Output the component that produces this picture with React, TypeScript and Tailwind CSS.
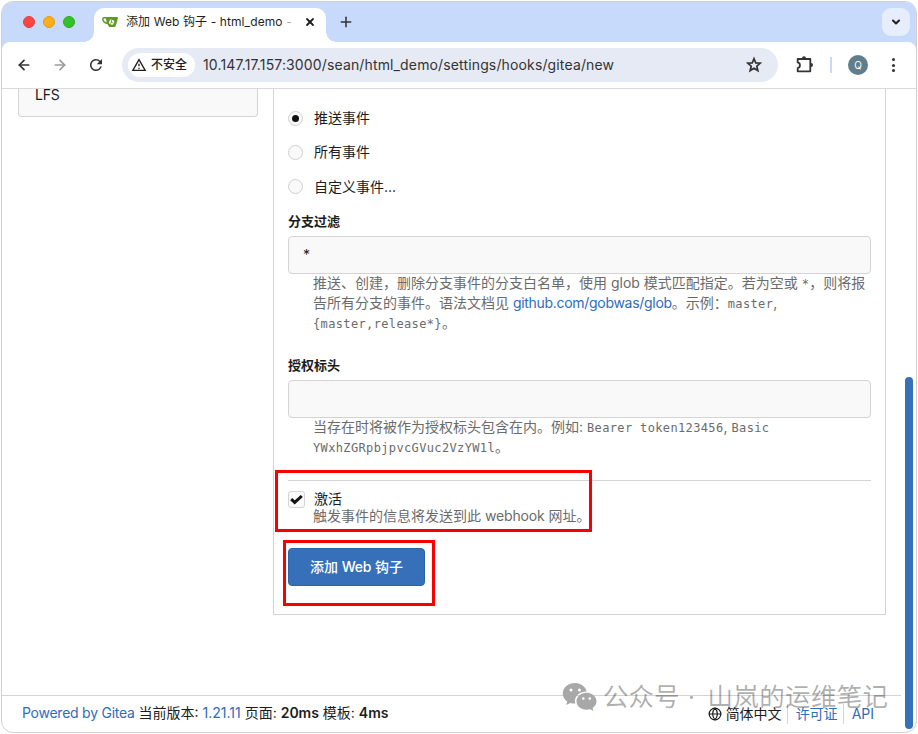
import type { ReactNode } from "react";
import { ArrowLeft, ArrowRight, ChevronDown, Globe, Plus, X } from "lucide-react";
import { MdOutlineWarningAmber, MdRefresh } from "react-icons/md";

const events = [
  { label: "推送事件", checked: true },
  { label: "所有事件", checked: false },
  { label: "自定义事件...", checked: false },
];

function GiteaLogo() {
  return (
    <svg className="h-3 w-4 shrink-0" viewBox="0 0 16 12">
      <path
        d="M1.200 1.200C2.500.7 8 1.400 14.800.9c.9 0 1.200.5 1 1.400-.4 2.200-1 4.900-1.900 7-.5 1.300-1.100 1.800-2.300 1.800H8.200C7 11.100 6.200 9.700 5.600 8.200 3 8.100.7 6.500.2 4 0 2.600.2 1.600 1.200 1.200Z"
        fill="#609926"
      />
      <path d="M1.900 2.500c.7-.2 1.500-.1 2 .1l.8 3.600C3 5.900 1.800 4.900 1.600 3.700c-.1-.6 0-1 .3-1.200Z" fill="#fff" />
      <rect x="7.300" y="3.800" width="4.600" height="4.600" rx="1" fill="#fff" transform="rotate(25 9.600 6.100)" />
      <path d="M9.800 3.200 9.400 6l1.400.8M9.400 6l-.8 1.600" fill="none" stroke="#609926" strokeWidth=".9" />
    </svg>
  );
}

function StarIcon() {
  return (
    <svg className="ml-auto size-5" viewBox="0 0 20 20">
      <path
        d="m10 3.700 1.750 4.150 4.450.4-3.400 2.950 1.050 4.400L10 13.250 6.150 15.600l1.050-4.400-3.400-2.950 4.450-.4Z"
        fill="none"
        stroke="#333"
        strokeWidth="1.700"
      />
    </svg>
  );
}

function ExtensionIcon() {
  return (
    <svg className="ml-4 h-5 w-5" viewBox="0 0 20 20">
      <path
        d="M3.700 4h12.600v12.300H3.700v-3.200c3-.6 3-5.100 0-5.700Z"
        fill="none"
        stroke="#333"
        strokeWidth="1.800"
        strokeLinejoin="round"
      />
      <path d="M8 3.300a2 2 0 0 1 4 0ZM17 8a2 2 0 0 1 0 4Z" fill="#333" />
    </svg>
  );
}

function WechatLogo() {
  return (
    <svg className="h-[30px] w-[36px]" viewBox="0 0 36 30">
      <path
        d="M13.200 1C6.200 1 .8 5.600.8 11.400c0 3.300 1.700 6.100 4.500 8l-1.200 3.700 4.300-2.200c1.500.4 3.100.7 5 .6A9.500 9.500 0 0 1 13 19c0-5.500 5-9.600 11.600-9.600C23.600 4.600 18.900 1 13.200 1Z"
        fill="#a8a8a8"
      />
      <path
        d="M24.500 10.800c-5.700 0-10 3.800-10 8.400s4.300 8.500 10 8.500c1.300 0 2.500-.2 3.600-.5l3.400 1.900-.9-3.200c2.500-1.700 3.900-4 3.900-6.700 0-4.600-4.400-8.400-10-8.400Z"
        fill="#a8a8a8"
      />
      <g fill="#fff">
        <circle cx="9" cy="8" r="1.500" />
        <circle cx="17.400" cy="8" r="1.500" />
        <circle cx="21.300" cy="16.500" r="1.250" />
        <circle cx="27.800" cy="16.500" r="1.250" />
      </g>
    </svg>
  );
}

function TabStrip() {
  return (
    <div className="flex h-10 shrink-0 bg-[#c8dafc] pl-[21px]">
      <div className="flex h-10 w-[71px] items-center gap-2">
        <span className="size-3 rounded-full border border-[#e0403c] bg-[#fc4642]" />
        <span className="size-3 rounded-full border border-[#e39a1b] bg-[#fcae19]" />
        <span className="size-3 rounded-full border border-[#2dab22] bg-[#35c127]" />
      </div>
      <div className="relative mt-1.5 flex h-[34px] w-[232px] items-center rounded-t-[10px] bg-white pr-[10px] pb-1.5 pl-2">
        <span className="absolute bottom-0 -left-[10px] size-[10px] bg-[radial-gradient(circle_at_0_0,transparent_9.5px,white_10px)]" />
        <span className="absolute -right-[10px] bottom-0 size-[10px] bg-[radial-gradient(circle_at_100%_0,transparent_9.5px,white_10px)]" />
        <GiteaLogo />
        <div className="ml-2 w-[168px] overflow-hidden text-[12px] leading-4 tracking-[0.1px] whitespace-nowrap text-[#1f1f1f]">
          添加 Web 钩子 - html_demo <span className="text-[#aaa]">-</span>
        </div>
        <X className="ml-auto size-3" strokeWidth={3.6} color="#1f1f1f" />
      </div>
      <Plus className="mt-3 ml-3 size-4" strokeWidth={2.3} color="#333" />
      <div className="mt-1.5 mr-1.5 ml-auto flex size-7 items-center justify-center rounded-[9px] bg-[#e6eefd]">
        <ChevronDown className="size-3" strokeWidth={4} color="#1f1f1f" />
      </div>
    </div>
  );
}

function Toolbar() {
  return (
    <div className="h-[47px] shrink-0 bg-[#c8dafc]">
      <div className="flex h-[47px] items-center rounded-t-[8px] border-b border-[#dadada] bg-white pl-[14px] text-[#333]">
        <ArrowLeft className="size-4" strokeWidth={2.6} />
        <ArrowRight className="ml-5 size-4 text-[#9b9b9b]" strokeWidth={2.6} />
        <MdRefresh className="ml-[19px] size-[18px]" />
        <div className="ml-[17px] flex h-[34px] w-[656px] items-center rounded-full bg-[#e6eaf5] pr-[14px] pl-1.5">
          <div className="flex h-6 w-[67px] items-center rounded-full bg-white pl-[3px] text-[12px] font-medium text-[#1f1f1f]">
            <MdOutlineWarningAmber className="mr-1 size-4" />
            不安全
          </div>
          <span className="ml-2 text-[14px] tracking-[0.14px] text-[#333]">
            10.147.17.157:3000/sean/html_demo/settings/hooks/gitea/new
          </span>
          <StarIcon />
        </div>
        <ExtensionIcon />
        <span className="ml-4 h-4 w-0.5 bg-[#c8dafc]" />
        <span className="ml-4 flex size-5 items-center justify-center rounded-full bg-[#607d8b] text-[10px] text-white">
          Q
        </span>
        <div className="ml-6 flex flex-col gap-[2.5px]">
          <span className="size-[3px] rounded-full bg-[#333]" />
          <span className="size-[3px] rounded-full bg-[#333]" />
          <span className="size-[3px] rounded-full bg-[#333]" />
        </div>
      </div>
    </div>
  );
}

function Code({ children }: { children: ReactNode }) {
  return (
    <code className="font-['DejaVu_Sans_Mono','Noto_Sans_CJK_SC',monospace] text-[12px] tracking-[0.36px]">
      {children}
    </code>
  );
}

function HelpLine({ children }: { children: ReactNode }) {
  return <p className="h-5 leading-5 whitespace-nowrap text-[#6b6b6b]">{children}</p>;
}

function HookForm() {
  return (
    <main className="ml-[15px] h-[526px] w-[613px] border border-t-0 border-[#d4d4d5] pt-[19px] pr-[14px] pl-[14px]">
      <div className="flex flex-col gap-[14.4px]">
        {events.map((event) => (
          <label key={event.label} className="flex h-5 items-center">
            <span className="flex size-[15px] items-center justify-center rounded-full border border-[#d0d0d1] bg-[#f9f9f9]">
              {event.checked ? <span className="size-[7px] rounded-full bg-[#111]" /> : null}
            </span>
            <span className="ml-[11px]">{event.label}</span>
          </label>
        ))}
      </div>

      <h3 className="mt-[14.2px] h-5 text-[13px] leading-5 font-bold">分支过滤</h3>
      <div className="mt-[5px] flex h-[38px] items-center rounded-[4px] border border-[#d4d4d5] bg-[#f9f9f9] pl-[14px]">
        *
      </div>
      <div className="-mt-px pl-[25px]">
        <HelpLine>
          推送、创建，删除分支事件的分支白名单，使用 glob 模式匹配指定。若为空或 <Code>*</Code>，则将报
        </HelpLine>
        <HelpLine>
          告所有分支的事件。语法文档见{" "}
          <a className="tracking-[-0.3px] text-[#2f6cba]">github.com/gobwas/glob</a>。示例：
          <Code>master</Code>,
        </HelpLine>
        <HelpLine>
          <Code>{"{master,release*}"}</Code>。
        </HelpLine>
      </div>

      <h3 className="mt-[22px] h-5 text-[13px] leading-5 font-bold">授权标头</h3>
      <div className="mt-[5px] h-[38px] rounded-[4px] border border-[#d4d4d5] bg-[#f9f9f9]" />
      <div className="-mt-px pl-[25px]">
        <HelpLine>
          当存在时将被作为授权标头包含在内。例如: <Code>Bearer token123456</Code>, <Code>Basic</Code>
        </HelpLine>
        <HelpLine>
          <Code>YWxhZGRpbjpvcGVuc2VzYW1l</Code>。
        </HelpLine>
      </div>

      <div className="relative mt-[23px] border-t border-[#d4d4d5] pt-[10px]">
        <div className="flex h-[17px] items-center">
          <span className="flex size-[17px] items-center justify-center rounded-[3px] border border-[#d4d4d5] bg-[#f9f9f9]">
            <svg className="h-[11px] w-[13px]" viewBox="0 0 13 11">
              <path d="m1.200 5.200 3.500 3.200L11.800 2" fill="none" stroke="#111" strokeWidth="3" />
            </svg>
          </span>
          <span className="ml-[9px] leading-4">激活</span>
        </div>
        <p className="-mt-px h-[18px] pl-[25px] leading-[18px] text-[#6b6b6b]">
          触发事件的信息将发送到此 <span className="tracking-[-0.15px]">webhook</span> 网址。
        </p>
        <div className="absolute -top-[11px] -left-[13px] h-[62px] w-[317px] border-3 border-[#f80000]" />
      </div>

      <div className="relative mt-[23px] w-[137px]">
        <button className="h-[38px] w-full rounded-[4px] border border-[#2b63ab] bg-[#3570b9] font-medium text-white">
          添加 <span className="tracking-[-0.2px]">Web</span> 钩子
        </button>
        <div className="absolute -top-2 -left-[5px] h-[66px] w-[152px] border-3 border-[#f80000]" />
      </div>
    </main>
  );
}

function Footer() {
  return (
    <footer className="mt-20 flex h-[37px] w-[899px] shrink-0 items-center border-t border-[#d4d4d5] pl-5 whitespace-nowrap">
      <div className="-mt-0.5">
        <a className="tracking-[-0.25px] text-[#2f6cba]">Powered by Gitea</a> 当前版本:{" "}
        <a className="text-[#2f6cba]">1.21.11</a> 页面:{" "}
        <strong className="font-semibold">20ms</strong> 模板: <strong className="font-semibold">4ms</strong>
      </div>
      <div className="mr-[27px] ml-auto flex items-center">
        <Globe className="mr-1 size-[14px]" />
        <span>简体中文</span>
        <span className="ml-[5px] h-5 w-px bg-[#d4d4d5]" />
        <a className="ml-2 text-[#2f6cba]">许可证</a>
        <span className="ml-[5px] h-5 w-px bg-[#d4d4d5]" />
        <a className="ml-2 text-[#2f6cba]">API</a>
      </div>
    </footer>
  );
}

export default function App() {
  return (
    <div className="relative h-[734px] w-[918px] overflow-hidden bg-white p-px font-[Inter,'Noto_Sans_CJK_SC',sans-serif] text-[14px] leading-5 text-[#1b1c1d]">
      <div className="flex h-[732px] w-[916px] flex-col overflow-hidden rounded-[12px] border border-[#d0d0d0] bg-white">
        <TabStrip />
        <Toolbar />
        <div className="flex pl-4">
          <aside className="h-[28px] w-[240px] rounded-b-[4px] border border-t-0 border-[#d4d4d5] bg-[#f9f9f9] pl-4">
            <div className="-mt-1 tracking-[-0.2px]">LFS</div>
          </aside>
          <HookForm />
        </div>
        <Footer />
      </div>

      <div className="absolute top-[377px] left-[905px] h-[352px] w-2 rounded-full bg-[#3570b9]" />
      <div className="absolute top-[681px] left-[562px] flex items-center text-[25.5px] leading-[32px] whitespace-nowrap text-black/33">
        <WechatLogo />
        <span className="ml-[5px]">公众号</span>
        <span className="w-[28px] pr-1 text-center">·</span>
        <span className="tracking-[0.35px]">山岚的运维笔记</span>
      </div>
    </div>
  );
}
